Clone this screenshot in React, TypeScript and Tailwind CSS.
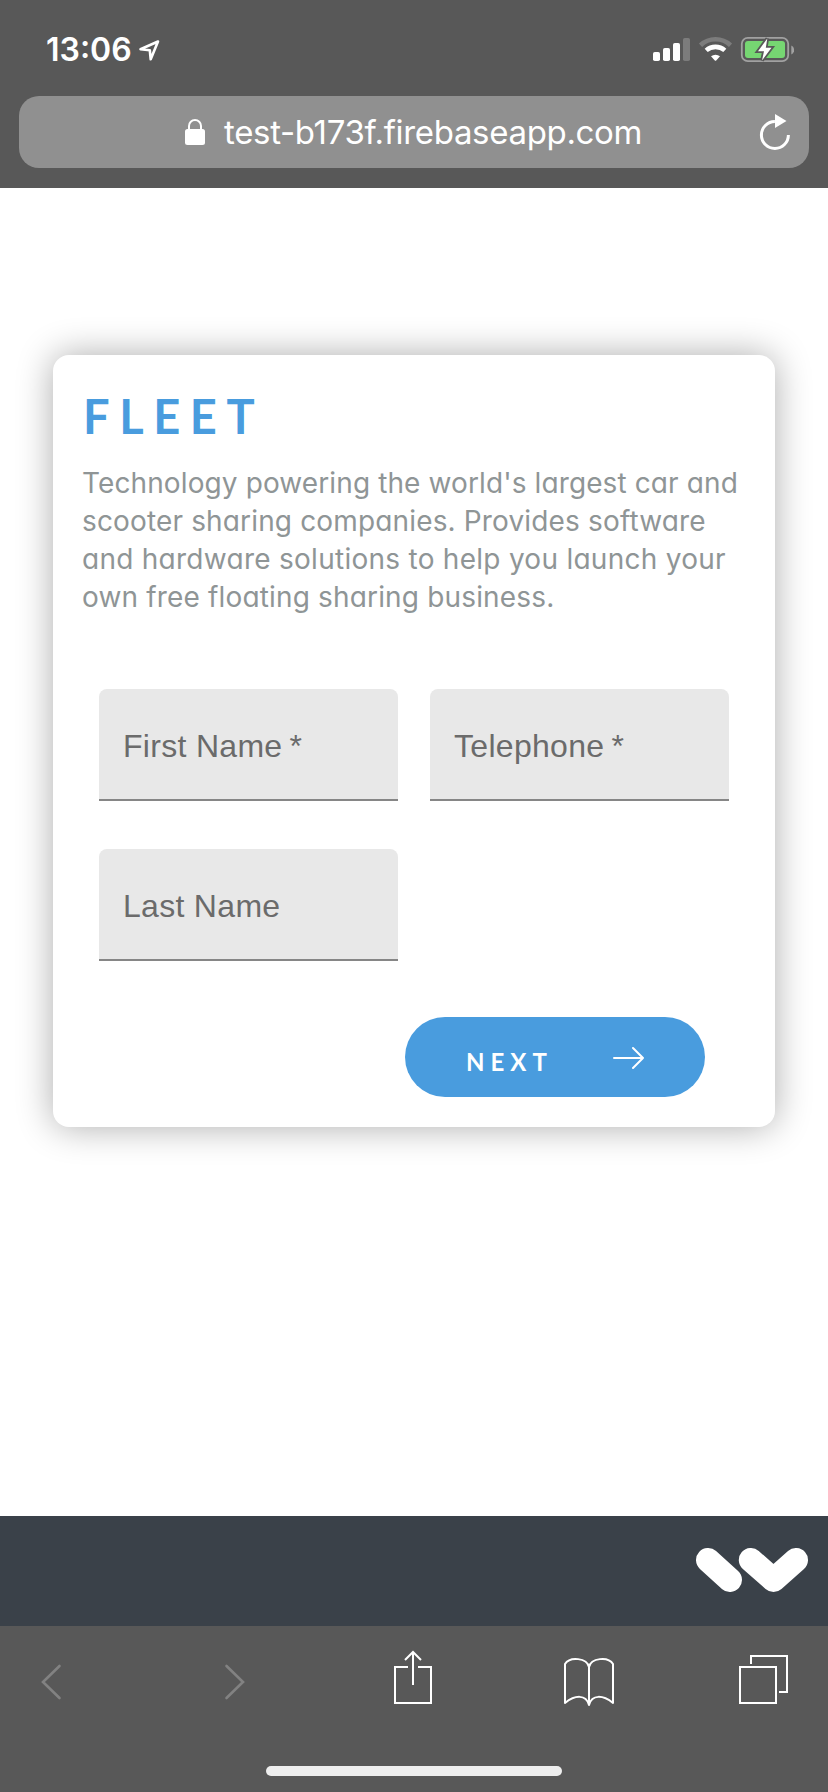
import React from "react";

function StatusBar() {
  return (
    <div className="flex h-24 items-center pl-[46px] pr-[34px] pt-1 text-white">
      <span className="w-[87px] whitespace-nowrap text-[32px] font-semibold leading-10">13:06</span>
      <svg className="ml-[5px] h-6 w-6" viewBox="0 0 24 24" fill="none" stroke="currentColor" strokeWidth="2.6" strokeLinejoin="round">
        <path d="M20 3.5 2.5 11.2 11.8 12.2 12.7 21.3Z" />
      </svg>
      <svg className="ml-auto h-7 w-[144px]" viewBox="0 0 144 28">
        <g fill="#fff">
          <rect x="3" y="16" width="7" height="9" rx="1.8" />
          <rect x="13" y="12" width="7" height="13" rx="1.8" />
          <rect x="23" y="7" width="7" height="18" rx="1.8" />
          <rect x="33" y="2" width="7" height="23" rx="1.8" opacity=".22" />
        </g>
        <g fill="none" stroke="#fff">
          <path d="M50.5 9.2A22 22 0 0 1 80.5 9.2" strokeWidth="4.6" opacity=".22" />
          <path d="M56.2 14.4A14 14 0 0 1 74.8 14.4" strokeWidth="4.6" />
        </g>
        <path d="M61 20.3A7 7 0 0 1 70 20.3L66.2 24.4Q65.5 25 64.8 24.4Z" fill="#fff" />
        <rect x="91.8" y="1.8" width="46.4" height="23.4" rx="6" fill="none" stroke="#a1a1a1" strokeWidth="1.8" />
        <rect x="95" y="5" width="40" height="17" rx="3" fill="#76d672" />
        <path d="M141.3 9.5a5 5 0 0 1 0 9z" fill="#a1a1a1" />
        <path d="M117.3 2.5 108 15.2H114L112 24.5 121.5 11.8H115.8Z" fill="#fff" stroke="#585858" strokeWidth="3.6" paintOrder="stroke" />
      </svg>
    </div>
  );
}

function AddressBar() {
  return (
    <div className="mx-[19px] flex h-[72px] items-center rounded-[20px] bg-[#909090] pl-[166px] pr-[18px] text-white">
      <svg className="h-7 w-5" viewBox="0 0 20 28">
        <path d="M4 13V8a6 6 0 0 1 12 0v5" fill="none" stroke="currentColor" strokeWidth="2" />
        <rect y="11" width="20" height="16" rx="2.5" fill="currentColor" />
      </svg>
      <span className="ml-[19px] whitespace-nowrap text-[33px] leading-10 tracking-[-0.33px]">test-b173f.firebaseapp.com</span>
      <svg className="ml-auto h-9 w-8" viewBox="0 0 32 36">
        <path d="M15.9 7.5A13.5 13.5 0 1 0 29.4 21" fill="none" stroke="currentColor" strokeWidth="3" />
        <path d="M16 0V14L27.5 7Z" fill="currentColor" />
      </svg>
    </div>
  );
}

function Field({ label, required = false }: { label: string; required?: boolean }) {
  return (
    <label className="flex h-28 items-center rounded-t-lg border-b-2 border-[#868686] bg-[#e8e8e8] pl-6 pt-1 font-['Liberation_Sans',sans-serif] text-[32px] leading-9 tracking-[0.3px] text-[#6b6b6b]">
      {label}
      {required && <span className="ml-[7px]">*</span>}
    </label>
  );
}

function FleetCard() {
  return (
    <section className="mx-[53px] mt-[167px] h-[772px] rounded-2xl bg-white pt-[33px] shadow-[0_0_36px_rgba(0,0,0,0.33)]">
      <h1 className="pl-[30px] font-['Lato',sans-serif] text-[47px] font-bold leading-[56px] tracking-[9.6px] text-[#499cde]">FLEET</h1>
      <p className="mt-5 whitespace-nowrap pl-[29px] text-[28px] leading-[38px] text-[#8f9596] [font-feature-settings:'cv11']">
        <span className="block tracking-[0.11px]">Technology powering the world's largest car and</span>
        <span className="block tracking-[0.15px]">scooter sharing companies. Provides software</span>
        <span className="block tracking-[0.27px]">and hardware solutions to help you launch your</span>
        <span className="block tracking-[0.16px]">own free floating sharing business.</span>
      </p>
      <form className="mx-[46px] mt-[73px] grid grid-cols-2 gap-x-8 gap-y-12">
        <Field label="First Name" required />
        <Field label="Telephone" required />
        <Field label="Last Name" />
      </form>
      <button className="ml-[352px] mt-14 flex h-20 w-[300px] items-center rounded-full bg-[#499cde] pl-[61px] text-white">
        <span className="w-[90px] whitespace-nowrap pt-[9px] text-left font-['Lato',sans-serif] text-2xl font-bold leading-7 tracking-[6px]">NEXT</span>
        <svg className="ml-14 mt-[2px] h-6 w-8" viewBox="0 0 32 24" fill="none" stroke="currentColor" strokeWidth="2" strokeLinecap="round" strokeLinejoin="round">
          <path d="M2 12H31M21 2 31 12 21 22" />
        </svg>
      </button>
    </section>
  );
}

function Footer() {
  return (
    <footer className="mt-auto flex h-[110px] items-center justify-end bg-[#3a4149] pb-[2px] pr-5">
      <svg className="h-11 w-28" viewBox="0 0 112 44" fill="none" stroke="#fff" strokeWidth="24" strokeLinecap="round" strokeLinejoin="round">
        <path d="M12 12 34 32M54.8 12 77.5 32 100 12" />
      </svg>
    </footer>
  );
}

function Toolbar() {
  return (
    <nav className="flex h-[166px] flex-col items-center bg-[#585858]">
      <div className="flex h-[110px] w-full items-start pl-10 text-white">
        <svg className="mt-[38px] h-9 w-[22px] text-[#828282]" viewBox="0 0 22 36" fill="none" stroke="currentColor" strokeWidth="2.6" strokeLinecap="round">
          <path d="M19.5 2 3 18 19.5 34" />
        </svg>
        <svg className="ml-[162px] mt-[38px] h-9 w-[22px] text-[#828282]" viewBox="0 0 22 36" fill="none" stroke="currentColor" strokeWidth="2.6" strokeLinecap="round">
          <path d="M2.5 2 19 18 2.5 34" />
        </svg>
        <svg className="ml-[147px] mt-6 h-[54px] w-10" viewBox="0 0 40 54" fill="none" stroke="currentColor" strokeWidth="2">
          <path d="M15 17H2V53H38V17H25M20 35V2M12 10 20 2 28 10" />
        </svg>
        <svg className="ml-[130px] mt-[27px] h-[54px] w-[52px]" viewBox="0 0 52 54" fill="none" stroke="currentColor" strokeWidth="2" strokeLinejoin="round">
          <path d="M26 52V14C24 5 7 3 2 11V50C12 42 23 41 26 52C29 41 40 42 50 50V11C45 3 28 5 26 14" />
        </svg>
        <svg className="ml-[123px] mt-7 h-[52px] w-[52px]" viewBox="0 0 52 52" fill="none" stroke="currentColor" strokeWidth="2">
          <path d="M2 13H38V49H2ZM13 10V2H49V38H41" />
        </svg>
      </div>
      <div className="mt-[30px] h-[10px] w-[296px] rounded-full bg-[#eeeeee]" />
    </nav>
  );
}

export default function App() {
  return (
    <div className="flex h-[1792px] w-[828px] flex-col overflow-hidden bg-white font-['Inter',sans-serif]">
      <header className="h-[188px] bg-[#585858]">
        <StatusBar />
        <AddressBar />
      </header>
      <FleetCard />
      <Footer />
      <Toolbar />
    </div>
  );
}
